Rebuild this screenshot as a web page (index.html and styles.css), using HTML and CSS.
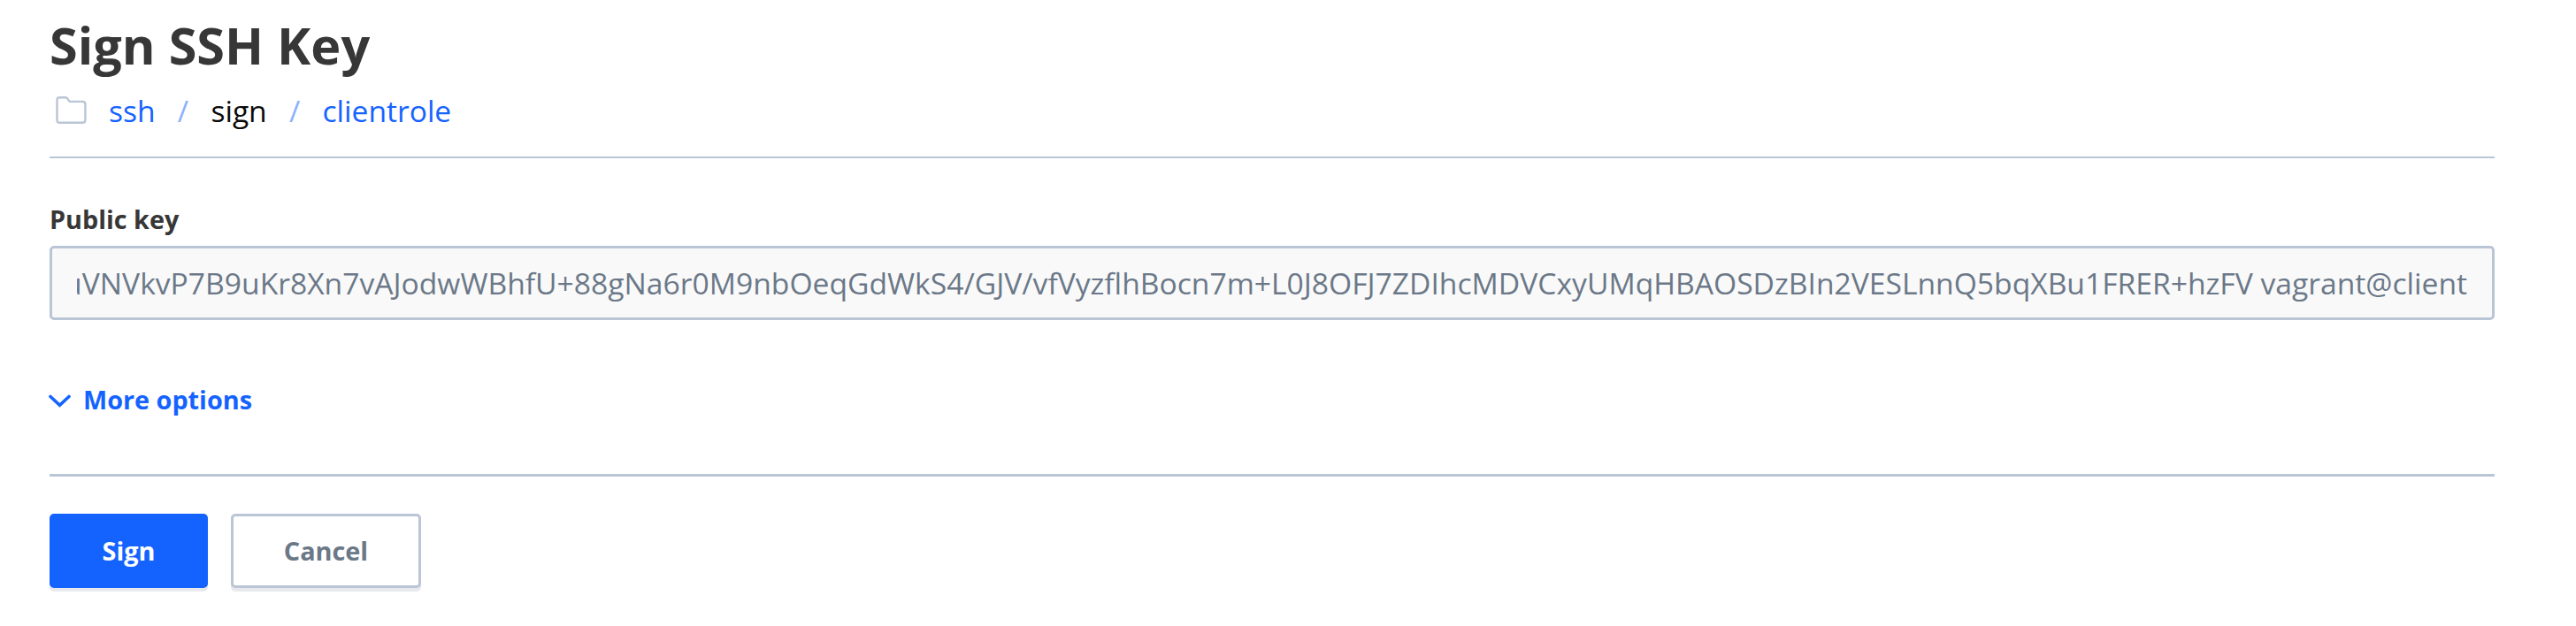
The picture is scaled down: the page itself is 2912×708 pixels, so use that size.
FILE: index.html
```html
<!DOCTYPE html>
<html lang="en">
<head>
<meta charset="utf-8">
<title>Sign SSH Key</title>
<link rel="stylesheet" href="styles.css">
</head>
<body>
<main class="page">
  <header class="page-header">
    <h1 class="title">Sign SSH Key</h1>
    <nav class="breadcrumb">
      <svg class="folder" width="36" height="34" viewBox="0 0 36 34" fill="none" stroke="#bac5d5" stroke-width="2.4" stroke-linejoin="round"><path d="M4.5 2.2H10.8C12 2.2 12.8 2.6 13.4 3.6L15.6 6.9H30.4C32.4 6.9 33.4 7.9 33.4 9.9V27.8C33.4 29.8 32.4 30.8 30.4 30.8H4.5C2.5 30.8 1.5 29.8 1.5 27.8V5.2C1.5 3.2 2.5 2.2 4.5 2.2Z"/></svg>
      <a class="crumb">ssh</a><span class="slash">/</span><span class="crumb current">sign</span><span class="slash">/</span><a class="crumb">clientrole</a>
    </nav>
  </header>
  <form class="form">
    <label class="label">Public key</label>
    <div class="input"><div class="clip"><span class="value">uVNVkvP7B9uKr8Xn7vAJodwWBhfU+88gNa6r0M9nbOeqGdWkS4/GJV/vfVyzflhBocn7m+L0J8OFJ7ZDIhcMDVCxyUMqHBAOSDzBIn2VESLnnQ5bqXBu1FRER+hzFV vagrant@client</span></div></div>
    <div class="toggle">
      <svg class="chevron" width="25" height="16" viewBox="0 0 25 16" fill="none" stroke="#1563ff" stroke-width="3.6" stroke-linecap="round" stroke-linejoin="miter"><path d="M2 2.5L12.5 12.2L23 2.5"/></svg>
      <span>More options</span>
    </div>
    <div class="actions">
      <button type="button" class="button primary">Sign</button>
      <button type="button" class="button">Cancel</button>
    </div>
  </form>
</main>
</body>
</html>
```
FILE: styles.css
```css
* { box-sizing: border-box; }
body {
  margin: 0;
  background: #fff;
  color: #373737;
  font-family: "Open Sans", "Noto Sans", sans-serif;
}
.page { padding: 0 92px 0 56px; height: 708px; overflow: hidden; }
.page-header {
  height: 179px;
  padding-top: 16px;
  border-bottom: 2px solid #bac5d5;
}
.title { margin: 0; font-size: 57.6px; line-height: 70px; font-weight: 700; }
.breadcrumb {
  display: flex;
  align-items: center;
  height: 48px;
  margin-top: 15px;
  padding: 0 0 0 7px;
  font-size: 33.6px;
  line-height: 48px;
}
.folder { flex: none; margin-right: 24px; }
.crumb { color: #1563ff; }
.current { color: #0a0a0a; }
.slash { color: #8ab1ff; width: 62.8px; text-align: center; }
.form { display: flex; flex-direction: column; }
.label {
  margin-top: 49px;
  font-size: 28.8px;
  line-height: 40px;
  font-weight: 700;
}
.input {
  height: 84px;
  margin-top: 10px;
  padding: 0 28px;
  border: 3px solid #bac5d5;
  border-radius: 5px;
  background: #f9f9f9;
  color: #6b7888;
}
.clip {
  display: flex;
  justify-content: flex-end;
  overflow: hidden;
}
.value { flex: none; white-space: nowrap; font-size: 33.64px; line-height: 78px; }
.toggle {
  display: flex;
  align-items: center;
  gap: 14px;
  height: 40px;
  margin-top: 70px;
  color: #1563ff;
  font-size: 28.8px;
  line-height: 40px;
  font-weight: 700;
}
.chevron { position: relative; top: 2px; margin-left: -1px; }
.actions {
  display: flex;
  gap: 26px;
  margin-top: 64px;
  padding-top: 42px;
  border-top: 3px solid #bac5d5;
}
.button {
  width: 215px;
  height: 84px;
  padding: 0;
  border: 3px solid #bac5d5;
  border-radius: 5px;
  background: #fff;
  box-shadow: 0 4px 0 #e7e9ee;
  color: #6b7888;
  font: 700 28.8px/78px "Open Sans", "Noto Sans", sans-serif;
}
.primary { width: 179px; border-color: #1563ff; background: #1563ff; color: #fff; }
```
